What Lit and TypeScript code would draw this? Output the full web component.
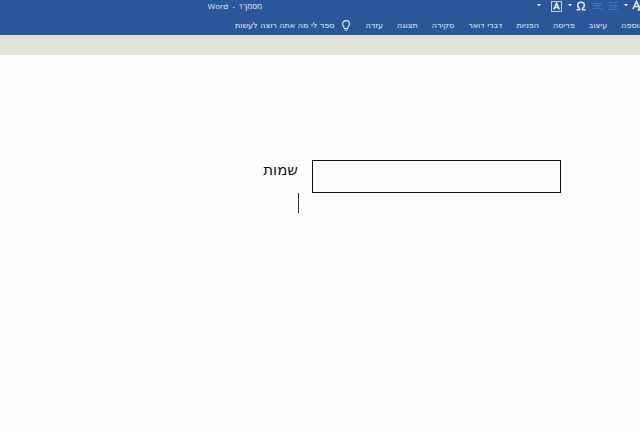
import { LitElement, html, css, svg } from "lit";
import { customElement, state } from "lit/decorators.js";

const TABS = ["הוספה", "עיצוב", "פריסה", "הפניות", "דברי דואר", "סקירה", "תצוגה", "עזרה"];

const chevron = html`<svg width="4" height="4" viewBox="0 0 4 4" aria-hidden="true">
  <path d="M0 0h4L2 2.500z" fill="currentColor" />
</svg>`;

const rows = (ys: number[]) => ys.map((y) => svg`<path d="M0 ${y}h10" stroke="currentColor" />`);

@customElement("app-root")
class AppRoot extends LitElement {
  @state() private names = "";

  static styles = css`
    :host {
      display: block;
      min-height: 100vh;
      overflow: hidden;
      font-family: "DejaVu Sans", sans-serif;
    }
    * {
      box-sizing: border-box;
    }
    .app {
      display: flex;
      flex-direction: column;
      min-height: 100vh;
      direction: rtl;
      background: #fdfdfb;
    }
    header {
      background: #2b579a;
      color: #e4ecf8;
      overflow: hidden;
    }
    .titlebar {
      display: flex;
      height: 16px;
      padding-bottom: 4px;
      align-items: center;
    }
    .quick {
      display: flex;
      flex: none;
      align-items: center;
      gap: 6px;
      width: 108px;
      margin-inline-start: -4px;
    }
    button {
      display: flex;
      flex: none;
      align-items: center;
      gap: 4px;
      padding: 0;
      border: 0;
      background: none;
      color: inherit;
      font: inherit;
      white-space: nowrap;
      cursor: pointer;
    }
    svg {
      display: block;
      flex: none;
    }
    .faded {
      color: #3f70bd;
    }
    .more {
      margin-inline-start: 4px;
    }
    .title {
      display: flex;
      gap: 4px;
      margin: 0;
      padding-inline-start: 274px;
      font: 400 8px/12px "Open Sans", sans-serif;
      white-space: nowrap;
    }
    .tabs {
      display: flex;
      align-items: center;
      gap: 14px;
      height: 19px;
      margin-inline-start: -4px;
      font-size: 8px;
      line-height: 12px;
    }
    .tell {
      gap: 7px;
      margin-inline-start: 2px;
    }
    .band {
      height: 20px;
      background: #e4e3d9;
    }
    .page {
      flex: 1;
      padding: 105px 79px 0;
    }
    .field {
      display: flex;
      align-items: flex-start;
      gap: 14px;
    }
    .field input {
      flex: 0 1 249px;
      min-width: 0;
      height: 33px;
      padding: 0 8px;
      border: 1px solid #111;
      border-radius: 0;
      outline: 0;
      background: transparent;
      font: inherit;
    }
    .field label {
      font-size: 15px;
      line-height: 20px;
      color: #111;
    }
    .caret {
      width: 1px;
      height: 20px;
      margin-inline-start: 262px;
      background: #333;
    }
  `;

  render() {
    return html`<div class="app">
      <header>
        <div class="titlebar">
          <div class="quick">
            <button aria-label="אפקטי טקסט">
              <svg width="12" height="12" viewBox="0 0 12 12" fill="none" stroke="currentColor">
                <path d="M1 9L4.500 1.500L8 9M2.500 6.500h4" stroke-width="1.600" />
                <path d="M6 10.500l4-4" stroke-width="2" />
              </svg>
              ${chevron}
            </button>
            <button class="faded" aria-label="טבלה">
              <svg width="10" height="8" viewBox="0 0 10 8">
                ${rows([0.5, 7.5])}
                <path d="M2 2l6 4M8 2L2 6M0 4h10" stroke="currentColor" />
              </svg>
            </button>
            <button class="faded" aria-label="יישור">
              <svg width="10" height="8" viewBox="0 0 10 8">
                ${rows([1.5, 3.5, 6.5])}
                <path d="M3.500 1v6M6.500 1v6" stroke="currentColor" />
              </svg>
            </button>
            <button aria-label="סמל">
              <svg width="10" height="10" viewBox="0 0 10 10" fill="none" stroke="currentColor">
                <path d="M.5 8.700h3V7.500C.8 5.800.8 1.300 5 1.300s4.200 4.500 1.500 6.200v1.200h3" stroke-width="1.500" />
              </svg>
              ${chevron}
            </button>
            <button aria-label="גבול תו">
              <svg width="11" height="11" viewBox="0 0 11 11" fill="none" stroke="currentColor">
                <rect x=".5" y=".5" width="10" height="10" stroke-opacity=".8" />
                <path d="M2.700 8.500L5.500 2.200L8.300 8.500M3.700 6.500h3.600" stroke-width="1.500" />
              </svg>
            </button>
            <button class="more" aria-label="התאמה אישית">${chevron}</button>
          </div>
          <h1 class="title"><span>מסמך1</span><span>-</span><span>Word</span></h1>
        </div>
        <nav class="tabs">
          ${TABS.map((t) => html`<button>${t}</button>`)}
          <button class="tell">
            <svg width="8" height="12" viewBox="0 0 8 12" fill="none" stroke="currentColor">
              <path d="M2.500 8.500C2.500 7 .6 6.300 .6 4a3.400 3.400 0 0 1 6.800 0C7.400 6.300 5.500 7 5.500 8.500zM2.500 10h3" stroke-width="1.200" />
            </svg>
            ספר לי מה אתה רוצה לעשות
          </button>
        </nav>
      </header>
      <div class="band"></div>
      <main class="page">
        <div class="field">
          <input
            id="names"
            .value=${this.names}
            @input=${(e: Event) => (this.names = (e.target as HTMLInputElement).value)}
          />
          <label for="names">שמות</label>
        </div>
        <div class="caret"></div>
      </main>
    </div>`;
  }
}
